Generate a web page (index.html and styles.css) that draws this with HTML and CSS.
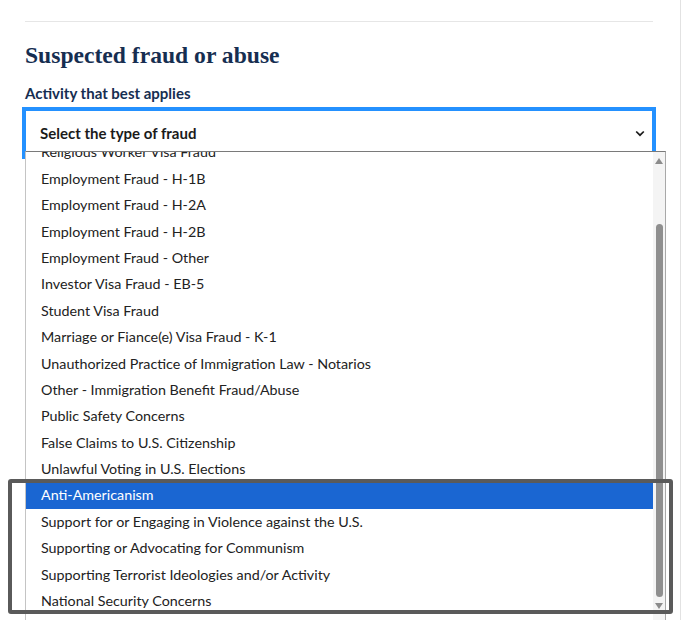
FILE: index.html
```html
<!DOCTYPE html>
<html lang="en">
<head>
    <meta charset="UTF-8">
    <title>Suspected fraud or abuse</title>
    <link rel="stylesheet" href="styles.css">
</head>
<body>
    <div class="page">
        <div class="content">
            <hr class="divider">

            <h2 class="section-title">Suspected fraud or abuse</h2>
            <label class="field-label">Activity that best applies</label>

            <div class="select-wrap">
                <div class="select-box">
                    <span>Select the type of fraud</span>
                    <svg class="chevron" width="10" height="7" viewBox="0 0 10 7">
                        <path d="M1.2 1.5 L5 5.2 L8.8 1.5" fill="none" stroke="#1b1b1b" stroke-width="1.7"/>
                    </svg>
                </div>

                <!-- opened dropdown list -->
                <div class="option-list">
                    <div class="options">
                        <div class="option">Religious Worker Visa Fraud</div>
                        <div class="option">Employment Fraud - H-1B</div>
                        <div class="option">Employment Fraud - H-2A</div>
                        <div class="option">Employment Fraud - H-2B</div>
                        <div class="option">Employment Fraud - Other</div>
                        <div class="option">Investor Visa Fraud - EB-5</div>
                        <div class="option">Student Visa Fraud</div>
                        <div class="option">Marriage or Fiance(e) Visa Fraud - K-1</div>
                        <div class="option">Unauthorized Practice of Immigration Law - Notarios</div>
                        <div class="option">Other - Immigration Benefit Fraud/Abuse</div>
                        <div class="option">Public Safety Concerns</div>
                        <div class="option">False Claims to U.S. Citizenship</div>
                        <div class="option">Unlawful Voting in U.S. Elections</div>
                        <div class="option selected">Anti-Americanism</div>
                        <div class="option">Support for or Engaging in Violence against the U.S.</div>
                        <div class="option">Supporting or Advocating for Communism</div>
                        <div class="option">Supporting Terrorist Ideologies and/or Activity</div>
                        <div class="option">National Security Concerns</div>
                    </div>
                    <div class="scrollbar">
                        <span class="arrow up"></span>
                        <div class="thumb"></div>
                        <span class="arrow down"></span>
                    </div>
                </div>
            </div>
        </div>

        <!-- highlight box drawn over the last options -->
        <div class="callout"></div>
    </div>
</body>
</html>
```

FILE: styles.css
```css
* {
    margin: 0;
    padding: 0;
    box-sizing: border-box;
}

body {
    background-color: #fff;
    font-family: 'Lato', 'Liberation Sans', sans-serif;
    overflow: hidden;
}

.page {
    position: relative;
    width: 681px;
    height: 620px;
    border-right: 1px solid #e2e2e2;
}

.content {
    padding: 21px 0 0 25px;
    width: 653px;
}

.divider {
    border: none;
    border-top: 1px solid #e6e6e6;
}

.section-title {
    font-family: 'Liberation Serif', serif;
    font-weight: bold;
    font-size: 23.6px;
    color: #162e51;
    margin-top: 20px;
    line-height: 26px;
}

.field-label {
    display: block;
    font-weight: bold;
    font-size: 15px;
    color: #162e51;
    margin-top: 16px;
    line-height: 18px;
}

/* Select + liste ouverte */
.select-wrap {
    margin-top: 9px;
}

.select-box {
    display: flex;
    justify-content: space-between;
    align-items: center;
    height: 44px;
    margin-left: 1px;
    margin-right: 1px;
    padding: 0 7px 0 14px;
    background-color: #fff;
    outline: 4px solid #2491ff;
    font-weight: bold;
    font-size: 15px;
    color: #1b1b1b;
}

.chevron {
    margin-top: 1px;
}

.option-list {
    display: flex;
    position: relative;
    width: 641px;
    height: 471px;
    margin-top: -4px;
    background-color: #fff;
    border-top: 1px solid #7a7a7a;
    border-left: 1px solid #c4c4c4;
    border-right: 1px solid #a8a8a8;
    overflow: hidden;
}

.options {
    flex: 1;
    margin-top: -12.6px;
}

.option {
    height: 26.4px;
    line-height: 26.4px;
    padding-left: 15px;
    font-size: 14.3px;
    color: #222;
    white-space: nowrap;
}

.option.selected {
    background-color: #1a66d2;
    color: #fff;
}

.scrollbar {
    width: 12px;
    display: flex;
    flex-direction: column;
    align-items: center;
    background-color: #f4f4f4;
    padding-top: 6px;
}

.arrow {
    width: 0;
    height: 0;
    border-left: 4.5px solid transparent;
    border-right: 4.5px solid transparent;
}

.arrow.up {
    border-bottom: 6px solid #8c8c8c;
}

.arrow.down {
    border-top: 6px solid #8c8c8c;
    margin-top: 6px;
}

.thumb {
    width: 7px;
    height: 373px;
    margin-top: 60px;
    border-radius: 4px;
    background-color: #8f8f8f;
}

.callout {
    position: absolute;
    left: 8px;
    top: 479px;
    width: 665px;
    height: 135px;
    border: 4px solid #5a5a5a;
    border-radius: 3px;
}
```
